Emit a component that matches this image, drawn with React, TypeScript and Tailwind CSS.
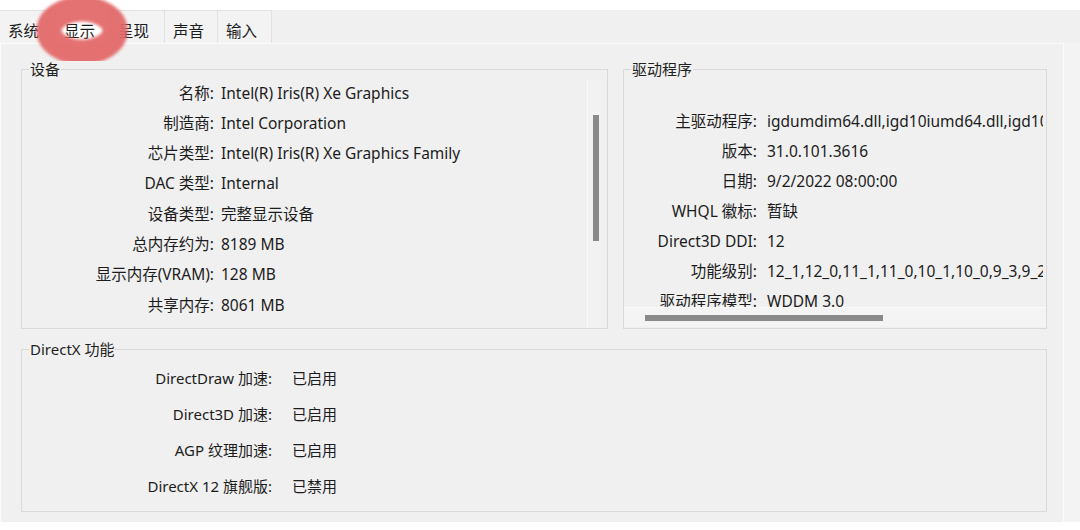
import React from "react";

const font = { fontFamily: '"Noto Sans", "Noto Sans CJK SC", sans-serif' };

const deviceRows: [string, string][] = [
  ["名称:", "Intel(R) Iris(R) Xe Graphics"],
  ["制造商:", "Intel Corporation"],
  ["芯片类型:", "Intel(R) Iris(R) Xe Graphics Family"],
  ["DAC 类型:", "Internal"],
  ["设备类型:", "完整显示设备"],
  ["总内存约为:", "8189 MB"],
  ["显示内存(VRAM):", "128 MB"],
  ["共享内存:", "8061 MB"],
];

const driverRows: [string, string][] = [
  ["主驱动程序:", "igdumdim64.dll,igd10iumd64.dll,igd10iumd64.dll,igd12umd64.dll"],
  ["版本:", "31.0.101.3616"],
  ["日期:", "9/2/2022 08:00:00"],
  ["WHQL 徽标:", "暂缺"],
  ["Direct3D DDI:", "12"],
  ["功能级别:", "12_1,12_0,11_1,11_0,10_1,10_0,9_3,9_2,9_1"],
  ["驱动程序模型:", "WDDM 3.0"],
];

const dxRows: [string, string][] = [
  ["DirectDraw 加速:", "已启用"],
  ["Direct3D 加速:", "已启用"],
  ["AGP 纹理加速:", "已启用"],
  ["DirectX 12 旗舰版:", "已禁用"],
];

const tabs = [
  { label: "系统", w: "w-[56px]", sel: false },
  { label: "显示", w: "w-[54px]", sel: true },
  { label: "呈现", w: "w-[55px]", sel: false },
  { label: "声音", w: "w-[53px]", sel: false },
  { label: "输入", w: "w-[54px]", sel: false },
];

function Title({ text }: { text: string }) {
  return (
    <div className="-mt-[11px] -mb-[1px] ml-[7px] h-[20px] w-fit bg-[#f0f0f0] px-[1px] leading-[20px] text-[15px] text-[#1f1f1f]">
      {text}
    </div>
  );
}

export default function App() {
  return (
    <div
      className="relative h-[530px] w-[1080px] overflow-hidden bg-white text-[15.5px] text-[#1c1c1c]"
      style={font}
    >
      <div className="h-[10px]" />
      <div className="flex h-[512px] flex-col bg-[#f3f3f3]">
        {/* tab strip */}
        <div className="flex h-[33px] bg-[#f0f0f0]">
          {tabs.map((t) => (
            <div
              key={t.label}
              className={`${t.w} flex h-[33px] items-center border-r border-t border-[#e2e2e2] pl-[8px] pt-[8px] leading-[24px] ${
                t.sel ? "bg-white" : "bg-[#f3f3f3]"
              }`}
            >
              {t.label}
            </div>
          ))}
        </div>
        {/* panel */}
        <div className="flex h-[479px] w-[1064px] flex-col border-l border-r border-t border-[#fbfbfb] bg-[#f0f0f0] pl-[20px] pt-[25px]">
          <div className="flex gap-[15px]">
            {/* device box */}
            <div className="flex h-[260px] w-[587px] flex-col border border-[#d9d9d9]">
              <Title text="设备" />
              <div className="flex flex-1">
                <div className="flex flex-1 flex-col">
                  {deviceRows.map(([l, v]) => (
                    <div key={l} className="flex h-[30.3px] items-center whitespace-nowrap">
                      <div className="w-[192px] text-right">{l}</div>
                      <div className="ml-[7px]">{v}</div>
                    </div>
                  ))}
                </div>
                <div className="mr-[6px] mt-[2px] flex w-[14px] justify-end border-l border-[#f9f9f9] bg-[#f2f2f2] pr-[2px]">
                  <div className="mt-[35px] h-[126px] w-[6px] bg-[#8a8a8a]" />
                </div>
              </div>
            </div>
            {/* driver box */}
            <div className="flex h-[260px] w-[424px] flex-col border border-[#d9d9d9]">
              <Title text="驱动程序" />
              <div className="flex h-[229px] flex-col overflow-hidden pr-[3px] pt-[29px]">
                {driverRows.map(([l, v]) => (
                  <div key={l} className="flex h-[30px] shrink-0 items-center overflow-hidden whitespace-nowrap">
                    <div className="w-[133px] shrink-0 text-right">{l}</div>
                    <div className="ml-[10px]">{v}</div>
                  </div>
                ))}
              </div>
              <div className="h-[20px] border-t border-[#fafafa] bg-[#f4f4f4] pl-[21px] pt-[7px]">
                <div className="h-[6px] w-[238px] bg-[#8a8a8a]" />
              </div>
            </div>
          </div>
          {/* DirectX box */}
          <div className="mt-[20px] flex h-[163px] w-[1026px] flex-col border border-[#d9d9d9]">
            <Title text="DirectX 功能" />
            <div className="flex flex-col pt-[2px] text-[15px]">
              {dxRows.map(([l, v]) => (
                <div key={l} className="flex h-[36px] items-center whitespace-nowrap">
                  <div className="w-[250px] text-right">{l}</div>
                  <div className="ml-[20px]">{v}</div>
                </div>
              ))}
            </div>
          </div>
        </div>
      </div>
      {/* red marker scribble over the selected tab */}
      <svg
        className="pointer-events-none absolute left-0 top-0"
        width="150"
        height="75"
        viewBox="0 0 150 75"
      >
        <defs>
          <filter id="soft" x="-20%" y="-20%" width="140%" height="140%">
            <feGaussianBlur stdDeviation="1.5" />
          </filter>
        </defs>
        <ellipse
          cx="82"
          cy="30.5"
          rx="33"
          ry="21.5"
          fill="none"
          stroke="#e36666"
          strokeOpacity="0.93"
          strokeWidth="25"
          filter="url(#soft)"
        />
      </svg>
    </div>
  );
}
